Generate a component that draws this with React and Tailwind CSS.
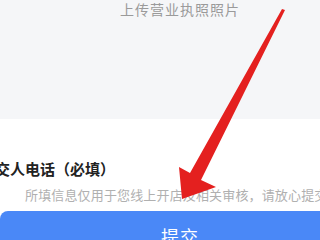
export default function App() {
  return (
    <div className="relative w-[320px] h-[240px] overflow-hidden bg-white" style={{ fontFamily: '"Noto Sans CJK SC", "Noto Sans", sans-serif' }}>
      <div className="h-[119px] bg-[#f5f6f8] pl-[120px] pt-[0px]">
        <div className="text-[14px] leading-[18px] text-[#9a9a9a] tracking-[1px] whitespace-nowrap">上传营业执照照片</div>
      </div>
      <div className="pt-[40px] -ml-[20px] text-[15px] leading-[20px] font-bold text-[#222] tracking-[0px] whitespace-nowrap">提交人电话（必填）</div>
      <div className="pt-[7px] pl-[25px] text-[13px] leading-[17px] text-[#b0b0b0] tracking-[0.15px] whitespace-nowrap">所填信息仅用于您线上开店及相关审核，请放心提交</div>
      <div className="mt-[8px] ml-[0px] w-[360px] h-[60px] rounded-[8px] bg-[#4a88f7] flex justify-center pt-[13px]">
        <span className="text-[18px] leading-[24px] text-white tracking-[1px]">提交</span>
      </div>
      <svg className="absolute left-0 top-0" width="320" height="240" viewBox="0 0 320 240">
        <path d="M282,9 L285,10 L201,180 L216,187 L182,199 L179,167 L190,173 Z" fill="#e4201f" />
      </svg>
    </div>
  );
}
